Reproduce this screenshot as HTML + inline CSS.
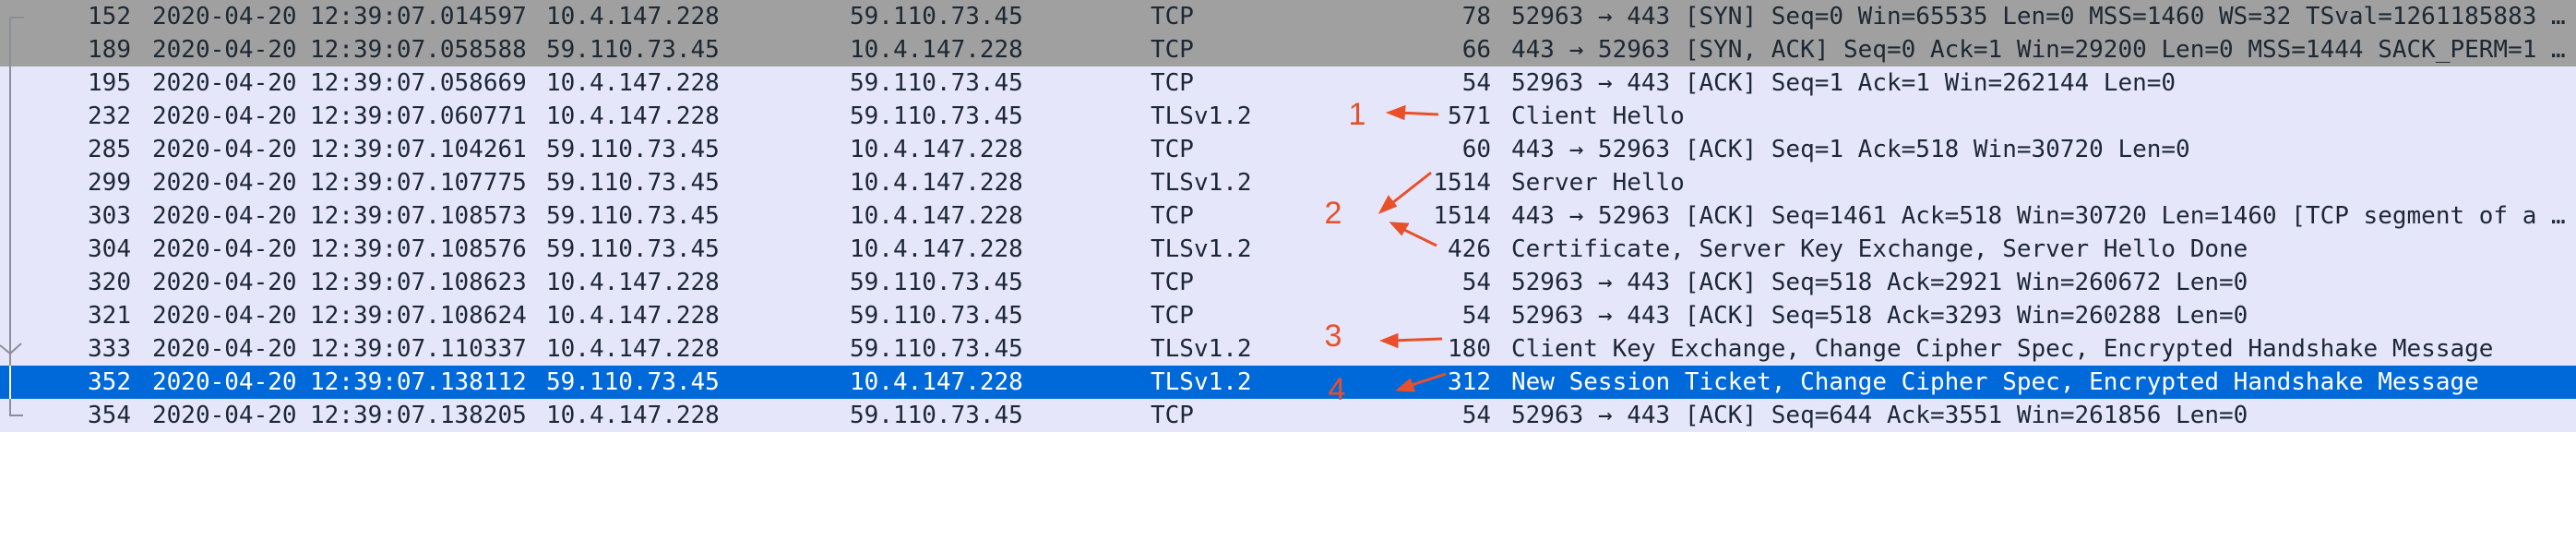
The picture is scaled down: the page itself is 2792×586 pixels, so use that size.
<!DOCTYPE html>
<html><head><meta charset="utf-8"><style>
html,body{margin:0;padding:0;width:2792px;height:586px;background:#fff;overflow:hidden;position:relative}
.r{position:absolute;left:0;width:2792px;height:36px;line-height:36px;font-family:"DejaVu Sans Mono","Liberation Mono",monospace;font-size:26px;color:#1c2833;background:#e6e6fa;white-space:pre;overflow:hidden}
.g{background:#a0a0a0}
.s{background:#0069d9;color:#fff}
.r span{position:absolute;top:0}
.n{right:2650px;text-align:right}
.d{left:165px}.t{left:336px}.src{left:592px}.dst{left:921px}.p{left:1247px}
.l{right:1176px;text-align:right}
.i{left:1638px}
</style></head><body>
<div class="r g" style="top:0"><span class="n">152</span><span class="d">2020-04-20</span><span class="t">12:39:07.014597</span><span class="src">10.4.147.228</span><span class="dst">59.110.73.45</span><span class="p">TCP</span><span class="l">78</span><span class="i">52963 → 443 [SYN] Seq=0 Win=65535 Len=0 MSS=1460 WS=32 TSval=1261185883 …</span></div>
<div class="r g" style="top:36px"><span class="n">189</span><span class="d">2020-04-20</span><span class="t">12:39:07.058588</span><span class="src">59.110.73.45</span><span class="dst">10.4.147.228</span><span class="p">TCP</span><span class="l">66</span><span class="i">443 → 52963 [SYN, ACK] Seq=0 Ack=1 Win=29200 Len=0 MSS=1444 SACK_PERM=1 …</span></div>
<div class="r" style="top:72px"><span class="n">195</span><span class="d">2020-04-20</span><span class="t">12:39:07.058669</span><span class="src">10.4.147.228</span><span class="dst">59.110.73.45</span><span class="p">TCP</span><span class="l">54</span><span class="i">52963 → 443 [ACK] Seq=1 Ack=1 Win=262144 Len=0</span></div>
<div class="r" style="top:108px"><span class="n">232</span><span class="d">2020-04-20</span><span class="t">12:39:07.060771</span><span class="src">10.4.147.228</span><span class="dst">59.110.73.45</span><span class="p">TLSv1.2</span><span class="l">571</span><span class="i">Client Hello</span></div>
<div class="r" style="top:144px"><span class="n">285</span><span class="d">2020-04-20</span><span class="t">12:39:07.104261</span><span class="src">59.110.73.45</span><span class="dst">10.4.147.228</span><span class="p">TCP</span><span class="l">60</span><span class="i">443 → 52963 [ACK] Seq=1 Ack=518 Win=30720 Len=0</span></div>
<div class="r" style="top:180px"><span class="n">299</span><span class="d">2020-04-20</span><span class="t">12:39:07.107775</span><span class="src">59.110.73.45</span><span class="dst">10.4.147.228</span><span class="p">TLSv1.2</span><span class="l">1514</span><span class="i">Server Hello</span></div>
<div class="r" style="top:216px"><span class="n">303</span><span class="d">2020-04-20</span><span class="t">12:39:07.108573</span><span class="src">59.110.73.45</span><span class="dst">10.4.147.228</span><span class="p">TCP</span><span class="l">1514</span><span class="i">443 → 52963 [ACK] Seq=1461 Ack=518 Win=30720 Len=1460 [TCP segment of a …</span></div>
<div class="r" style="top:252px"><span class="n">304</span><span class="d">2020-04-20</span><span class="t">12:39:07.108576</span><span class="src">59.110.73.45</span><span class="dst">10.4.147.228</span><span class="p">TLSv1.2</span><span class="l">426</span><span class="i">Certificate, Server Key Exchange, Server Hello Done</span></div>
<div class="r" style="top:288px"><span class="n">320</span><span class="d">2020-04-20</span><span class="t">12:39:07.108623</span><span class="src">10.4.147.228</span><span class="dst">59.110.73.45</span><span class="p">TCP</span><span class="l">54</span><span class="i">52963 → 443 [ACK] Seq=518 Ack=2921 Win=260672 Len=0</span></div>
<div class="r" style="top:324px"><span class="n">321</span><span class="d">2020-04-20</span><span class="t">12:39:07.108624</span><span class="src">10.4.147.228</span><span class="dst">59.110.73.45</span><span class="p">TCP</span><span class="l">54</span><span class="i">52963 → 443 [ACK] Seq=518 Ack=3293 Win=260288 Len=0</span></div>
<div class="r" style="top:360px"><span class="n">333</span><span class="d">2020-04-20</span><span class="t">12:39:07.110337</span><span class="src">10.4.147.228</span><span class="dst">59.110.73.45</span><span class="p">TLSv1.2</span><span class="l">180</span><span class="i">Client Key Exchange, Change Cipher Spec, Encrypted Handshake Message</span></div>
<div class="r s" style="top:396px"><span class="n">352</span><span class="d">2020-04-20</span><span class="t">12:39:07.138112</span><span class="src">59.110.73.45</span><span class="dst">10.4.147.228</span><span class="p">TLSv1.2</span><span class="l">312</span><span class="i">New Session Ticket, Change Cipher Spec, Encrypted Handshake Message</span></div>
<div class="r" style="top:432px"><span class="n">354</span><span class="d">2020-04-20</span><span class="t">12:39:07.138205</span><span class="src">10.4.147.228</span><span class="dst">59.110.73.45</span><span class="p">TCP</span><span class="l">54</span><span class="i">52963 → 443 [ACK] Seq=644 Ack=3551 Win=261856 Len=0</span></div>
<svg width="2792" height="586" style="position:absolute;left:0;top:0">
<g fill="none" stroke-width="2">
<path d="M26 19H11V396" stroke="#8a9099"/>
<path d="M11 396V432" stroke="#fff"/>
<path d="M11 432V450H25" stroke="#8a9099"/>
<path d="M0 374L11 383L23 372" stroke="#8a9099"/>
</g>
<g stroke="#e8502a" stroke-width="3" fill="#e8502a">
<path d="M1559 124L1515 122" /><path d="M1506 122L1522 116L1521 128Z"/>
<path d="M1551 187L1505 223"/><path d="M1497 229L1505 214L1512 223Z"/>
<path d="M1557 266L1516 246"/><path d="M1509 242L1525 243L1519 253Z"/>
<path d="M1563 367L1508 369"/><path d="M1499 369L1514 363L1514 375Z"/>
<path d="M1567 405L1524 419"/><path d="M1516 422L1528 412L1532 423Z"/>
</g>
<g font-family="Liberation Sans, sans-serif" font-size="34" fill="#e8502a" text-anchor="middle">
<text x="1471" y="135">1</text>
<text x="1445" y="242">2</text>
<text x="1445" y="375">3</text>
<text x="1449" y="433">4</text>
</g>
</svg>
</body></html>
